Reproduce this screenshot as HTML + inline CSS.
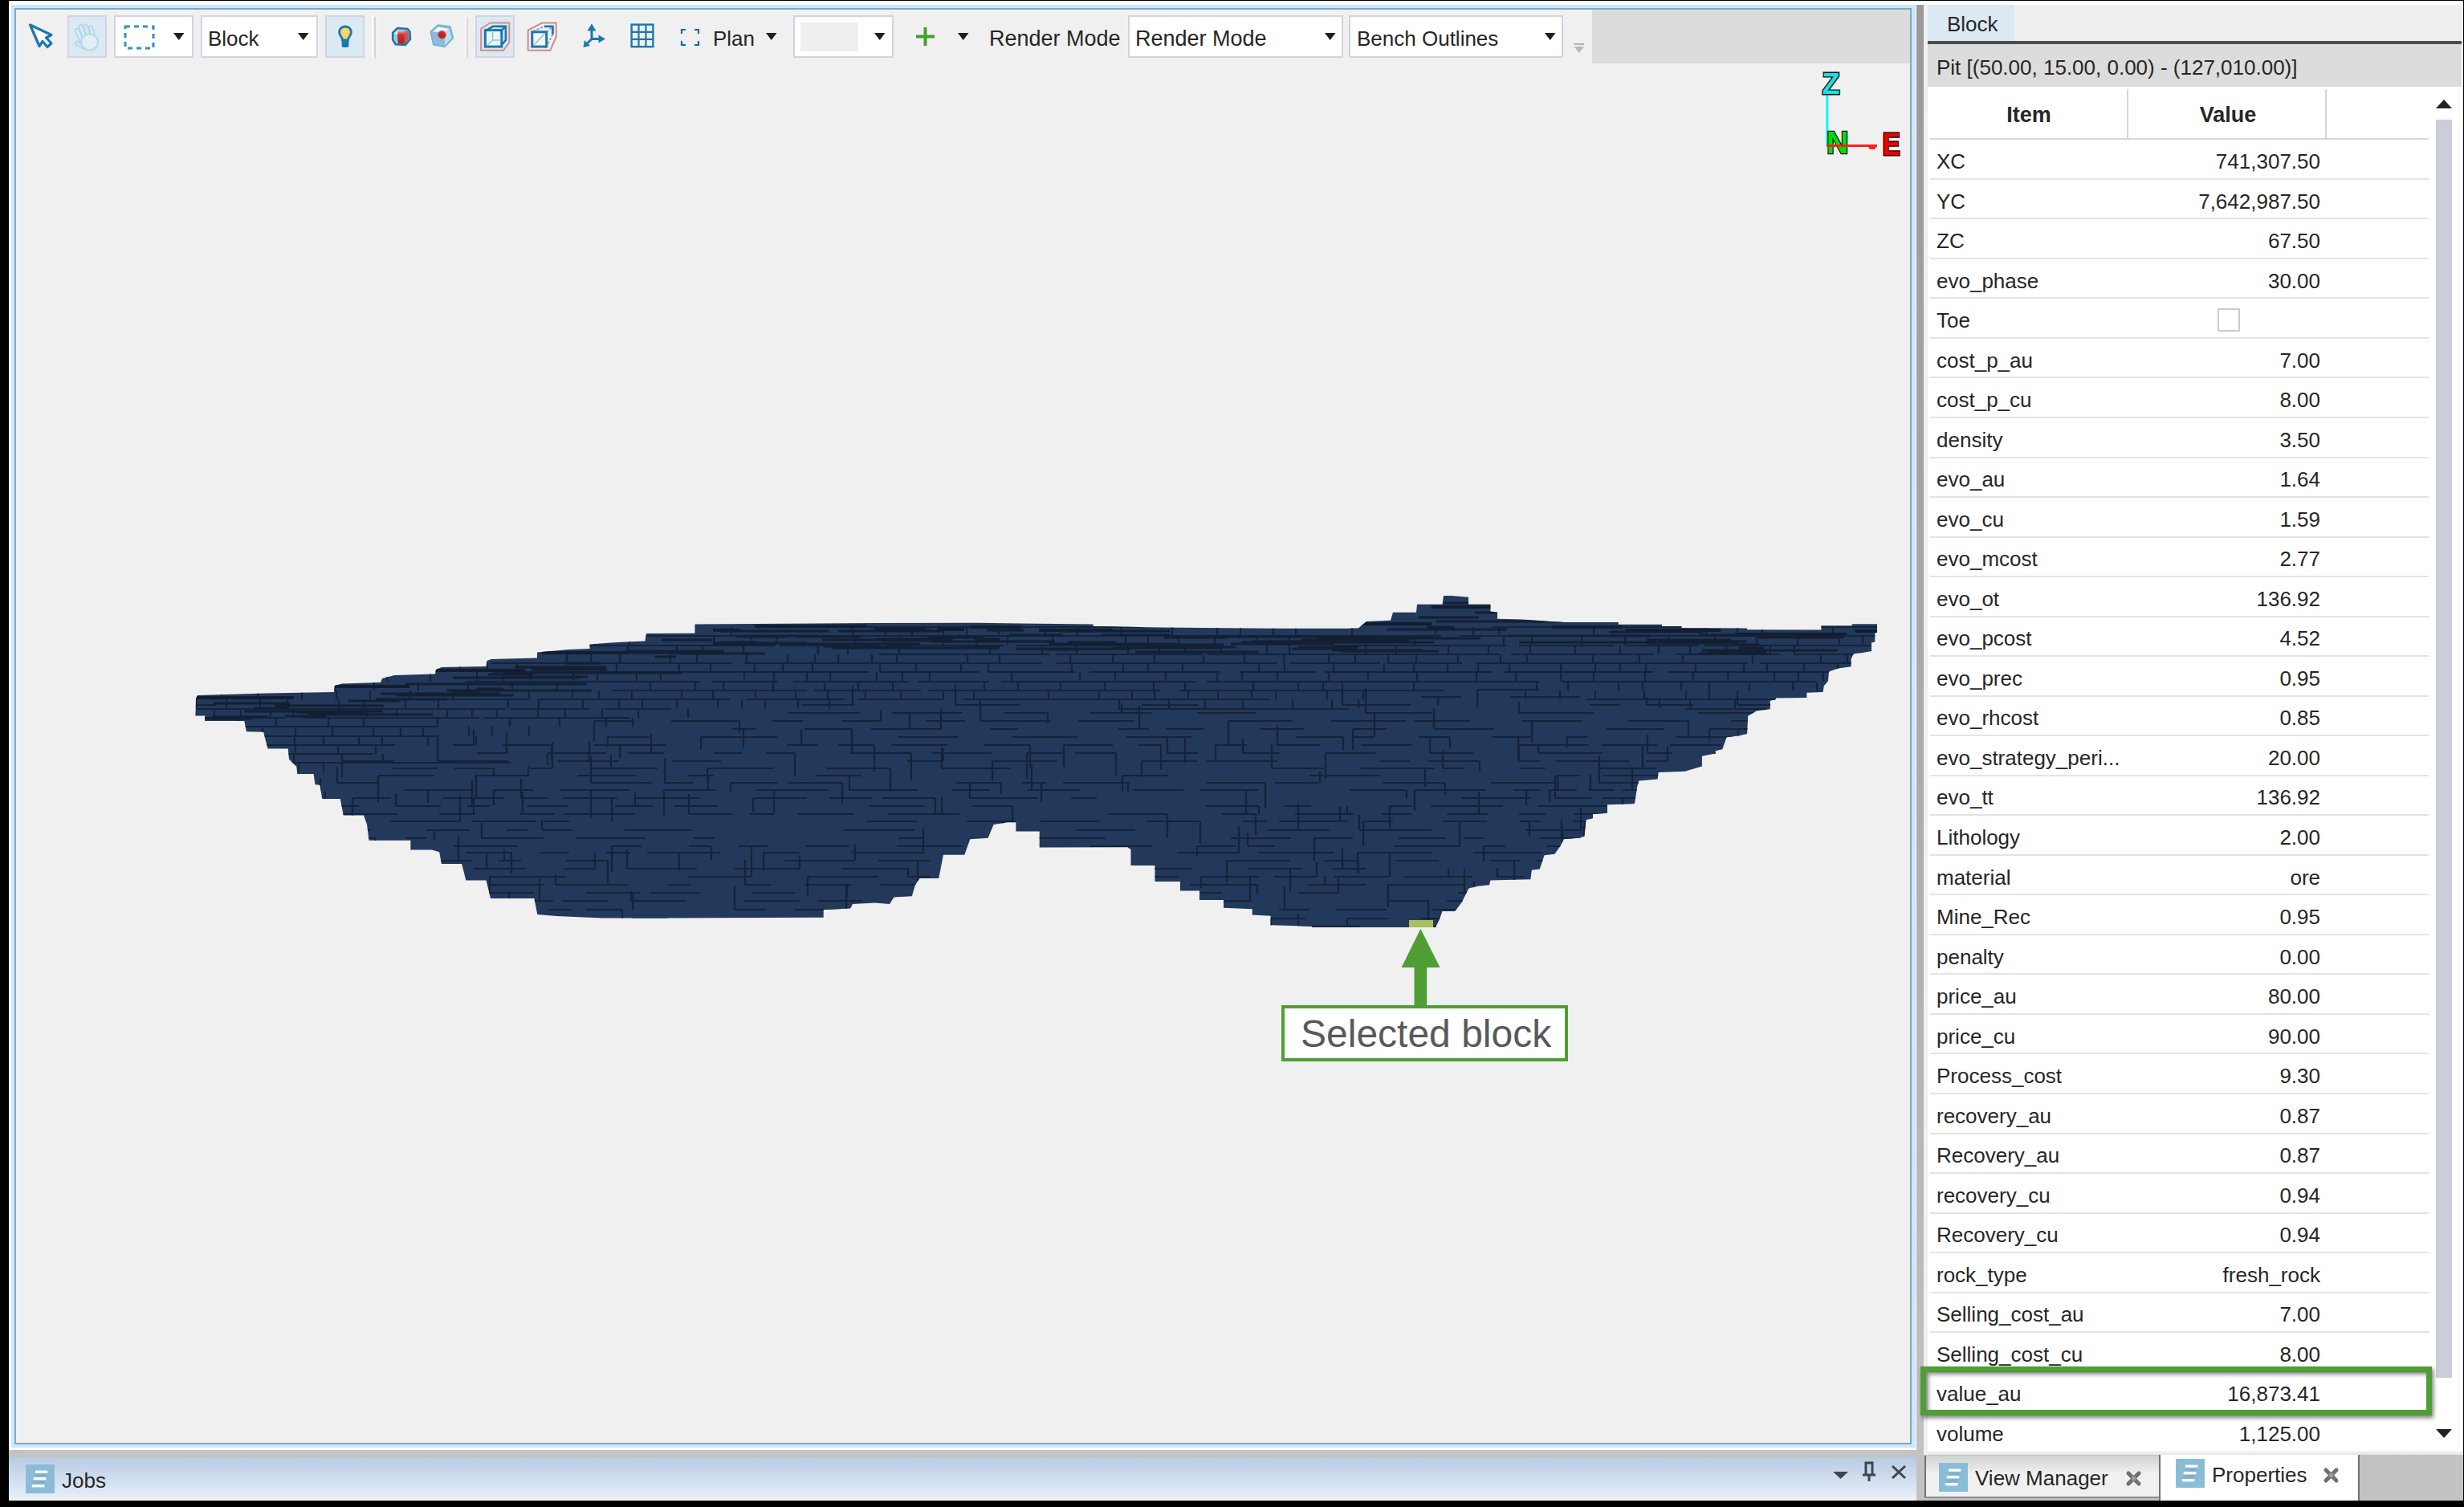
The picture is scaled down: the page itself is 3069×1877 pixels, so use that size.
<!DOCTYPE html><html><head><meta charset="utf-8"><style>
html,body{margin:0;padding:0;}
body{width:3069px;height:1877px;background:#000;position:relative;overflow:hidden;font-family:'Liberation Sans', sans-serif;}
.r{position:absolute;box-sizing:border-box;}
.t{position:absolute;white-space:nowrap;font-family:'Liberation Sans', sans-serif;}
svg{position:absolute;overflow:visible;}
</style></head><body>
<div class="r" style="left:11px;top:1px;width:3057px;height:1868px;background:#fff"></div>
<div class="r" style="left:14px;top:6px;width:2372px;height:1797px;background:#d2e4f8"></div>
<div class="r" style="left:18px;top:10px;width:2363px;height:1789px;background:#f0f0f0;border:2px solid #7aaac8"></div>
<div class="r" style="left:1983px;top:12px;width:396px;height:67px;background:#dcdcdc"></div>
<div class="r" style="left:2387px;top:6px;width:9px;height:1863px;background:linear-gradient(#999999,#acabab 50%,#c4c3c2)"></div>
<div class="r" style="left:11px;top:1806px;width:2376px;height:9px;background:#c4c3c2"></div>
<div class="r" style="left:11px;top:1815px;width:2376px;height:54px;background:linear-gradient(#b8cbe3,#e4edf9 90.7%,#f0f0f0 90.7%)"></div>
<div class="r" style="left:2396px;top:6px;width:5px;height:1807px;background:#f0f0f0"></div>
<div class="r" style="left:2401px;top:6px;width:667px;height:45px;background:#efefef"></div>
<div class="r" style="left:2401px;top:6px;width:108px;height:45px;background:#dbeaf2"></div>
<div class="r" style="left:2401px;top:51px;width:665px;height:4px;background:#4d4d4d"></div>
<div class="r" style="left:2401px;top:55px;width:665px;height:53px;background:#dcdcdc"></div>
<div class="r" style="left:2401px;top:108px;width:667px;height:1699px;background:#fff"></div>
<div class="r" style="left:2401px;top:1807px;width:667px;height:5px;background:linear-gradient(#f6f6f6,#e6e6e6)"></div>
<div class="r" style="left:2396px;top:1812px;width:672px;height:57px;background:#c3c2c2"></div>
<div class="r" style="left:2397px;top:1813px;width:294px;height:53px;background:linear-gradient(#d2d2d2,#f0f0f0 45%,#f0f0f0);border-left:2px solid #70727e;border-bottom:2px solid #8a8c96"></div>
<div class="r" style="left:2689px;top:1812px;width:250px;height:57px;background:#fff;border-left:2px solid #70727e;border-right:2px solid #70727e"></div>
<div class="t" style="left:2425px;top:16.99px;font-size:26px;line-height:26px;color:#262626;font-weight:normal;">Block</div>
<div class="t" style="left:2412px;top:70.99px;font-size:26px;line-height:26px;color:#262626;font-weight:normal;">Pit [(50.00, 15.00, 0.00) - (127,010.00)]</div>
<div class="r" style="left:2649px;top:111px;width:2px;height:61px;background:#d4d6e2"></div>
<div class="r" style="left:2896px;top:111px;width:2px;height:61px;background:#d4d6e2"></div>
<div class="r" style="left:2404px;top:172px;width:621px;height:2px;background:#d4d6e2"></div>
<div class="t" style="left:2227px;width:600px;text-align:center;top:129.64px;font-size:27px;line-height:27px;color:#262626;font-weight:bold;">Item</div>
<div class="t" style="left:2475px;width:600px;text-align:center;top:129.64px;font-size:27px;line-height:27px;color:#262626;font-weight:bold;">Value</div>
<div class="t" style="left:2412px;top:187.99px;font-size:26px;line-height:26px;color:#262626;font-weight:normal;">XC</div>
<div class="t" style="right:179px;top:187.99px;font-size:26px;line-height:26px;color:#262626;font-weight:normal;">741,307.50</div>
<div class="r" style="left:2404px;top:222px;width:621px;height:2px;background:#e4e4e4"></div>
<div class="t" style="left:2412px;top:237.52px;font-size:26px;line-height:26px;color:#262626;font-weight:normal;">YC</div>
<div class="t" style="right:179px;top:237.52px;font-size:26px;line-height:26px;color:#262626;font-weight:normal;">7,642,987.50</div>
<div class="r" style="left:2404px;top:271px;width:621px;height:2px;background:#e4e4e4"></div>
<div class="t" style="left:2412px;top:287.05px;font-size:26px;line-height:26px;color:#262626;font-weight:normal;">ZC</div>
<div class="t" style="right:179px;top:287.05px;font-size:26px;line-height:26px;color:#262626;font-weight:normal;">67.50</div>
<div class="r" style="left:2404px;top:321px;width:621px;height:2px;background:#e4e4e4"></div>
<div class="t" style="left:2412px;top:336.58px;font-size:26px;line-height:26px;color:#262626;font-weight:normal;">evo_phase</div>
<div class="t" style="right:179px;top:336.58px;font-size:26px;line-height:26px;color:#262626;font-weight:normal;">30.00</div>
<div class="r" style="left:2404px;top:370px;width:621px;height:2px;background:#e4e4e4"></div>
<div class="t" style="left:2412px;top:386.11px;font-size:26px;line-height:26px;color:#262626;font-weight:normal;">Toe</div>
<div class="r" style="left:2762px;top:384px;width:28px;height:29px;background:#fff;border:2px solid #c8cad8"></div>
<div class="r" style="left:2404px;top:420px;width:621px;height:2px;background:#e4e4e4"></div>
<div class="t" style="left:2412px;top:435.64px;font-size:26px;line-height:26px;color:#262626;font-weight:normal;">cost_p_au</div>
<div class="t" style="right:179px;top:435.64px;font-size:26px;line-height:26px;color:#262626;font-weight:normal;">7.00</div>
<div class="r" style="left:2404px;top:469px;width:621px;height:2px;background:#e4e4e4"></div>
<div class="t" style="left:2412px;top:485.17px;font-size:26px;line-height:26px;color:#262626;font-weight:normal;">cost_p_cu</div>
<div class="t" style="right:179px;top:485.17px;font-size:26px;line-height:26px;color:#262626;font-weight:normal;">8.00</div>
<div class="r" style="left:2404px;top:519px;width:621px;height:2px;background:#e4e4e4"></div>
<div class="t" style="left:2412px;top:534.70px;font-size:26px;line-height:26px;color:#262626;font-weight:normal;">density</div>
<div class="t" style="right:179px;top:534.70px;font-size:26px;line-height:26px;color:#262626;font-weight:normal;">3.50</div>
<div class="r" style="left:2404px;top:569px;width:621px;height:2px;background:#e4e4e4"></div>
<div class="t" style="left:2412px;top:584.23px;font-size:26px;line-height:26px;color:#262626;font-weight:normal;">evo_au</div>
<div class="t" style="right:179px;top:584.23px;font-size:26px;line-height:26px;color:#262626;font-weight:normal;">1.64</div>
<div class="r" style="left:2404px;top:618px;width:621px;height:2px;background:#e4e4e4"></div>
<div class="t" style="left:2412px;top:633.76px;font-size:26px;line-height:26px;color:#262626;font-weight:normal;">evo_cu</div>
<div class="t" style="right:179px;top:633.76px;font-size:26px;line-height:26px;color:#262626;font-weight:normal;">1.59</div>
<div class="r" style="left:2404px;top:668px;width:621px;height:2px;background:#e4e4e4"></div>
<div class="t" style="left:2412px;top:683.29px;font-size:26px;line-height:26px;color:#262626;font-weight:normal;">evo_mcost</div>
<div class="t" style="right:179px;top:683.29px;font-size:26px;line-height:26px;color:#262626;font-weight:normal;">2.77</div>
<div class="r" style="left:2404px;top:717px;width:621px;height:2px;background:#e4e4e4"></div>
<div class="t" style="left:2412px;top:732.82px;font-size:26px;line-height:26px;color:#262626;font-weight:normal;">evo_ot</div>
<div class="t" style="right:179px;top:732.82px;font-size:26px;line-height:26px;color:#262626;font-weight:normal;">136.92</div>
<div class="r" style="left:2404px;top:767px;width:621px;height:2px;background:#e4e4e4"></div>
<div class="t" style="left:2412px;top:782.35px;font-size:26px;line-height:26px;color:#262626;font-weight:normal;">evo_pcost</div>
<div class="t" style="right:179px;top:782.35px;font-size:26px;line-height:26px;color:#262626;font-weight:normal;">4.52</div>
<div class="r" style="left:2404px;top:816px;width:621px;height:2px;background:#e4e4e4"></div>
<div class="t" style="left:2412px;top:831.88px;font-size:26px;line-height:26px;color:#262626;font-weight:normal;">evo_prec</div>
<div class="t" style="right:179px;top:831.88px;font-size:26px;line-height:26px;color:#262626;font-weight:normal;">0.95</div>
<div class="r" style="left:2404px;top:866px;width:621px;height:2px;background:#e4e4e4"></div>
<div class="t" style="left:2412px;top:881.41px;font-size:26px;line-height:26px;color:#262626;font-weight:normal;">evo_rhcost</div>
<div class="t" style="right:179px;top:881.41px;font-size:26px;line-height:26px;color:#262626;font-weight:normal;">0.85</div>
<div class="r" style="left:2404px;top:915px;width:621px;height:2px;background:#e4e4e4"></div>
<div class="t" style="left:2412px;top:930.94px;font-size:26px;line-height:26px;color:#262626;font-weight:normal;">evo_strategy_peri...</div>
<div class="t" style="right:179px;top:930.94px;font-size:26px;line-height:26px;color:#262626;font-weight:normal;">20.00</div>
<div class="r" style="left:2404px;top:965px;width:621px;height:2px;background:#e4e4e4"></div>
<div class="t" style="left:2412px;top:980.47px;font-size:26px;line-height:26px;color:#262626;font-weight:normal;">evo_tt</div>
<div class="t" style="right:179px;top:980.47px;font-size:26px;line-height:26px;color:#262626;font-weight:normal;">136.92</div>
<div class="r" style="left:2404px;top:1014px;width:621px;height:2px;background:#e4e4e4"></div>
<div class="t" style="left:2412px;top:1030.00px;font-size:26px;line-height:26px;color:#262626;font-weight:normal;">Lithology</div>
<div class="t" style="right:179px;top:1030.00px;font-size:26px;line-height:26px;color:#262626;font-weight:normal;">2.00</div>
<div class="r" style="left:2404px;top:1064px;width:621px;height:2px;background:#e4e4e4"></div>
<div class="t" style="left:2412px;top:1079.53px;font-size:26px;line-height:26px;color:#262626;font-weight:normal;">material</div>
<div class="t" style="right:179px;top:1079.53px;font-size:26px;line-height:26px;color:#262626;font-weight:normal;">ore</div>
<div class="r" style="left:2404px;top:1113px;width:621px;height:2px;background:#e4e4e4"></div>
<div class="t" style="left:2412px;top:1129.06px;font-size:26px;line-height:26px;color:#262626;font-weight:normal;">Mine_Rec</div>
<div class="t" style="right:179px;top:1129.06px;font-size:26px;line-height:26px;color:#262626;font-weight:normal;">0.95</div>
<div class="r" style="left:2404px;top:1163px;width:621px;height:2px;background:#e4e4e4"></div>
<div class="t" style="left:2412px;top:1178.59px;font-size:26px;line-height:26px;color:#262626;font-weight:normal;">penalty</div>
<div class="t" style="right:179px;top:1178.59px;font-size:26px;line-height:26px;color:#262626;font-weight:normal;">0.00</div>
<div class="r" style="left:2404px;top:1212px;width:621px;height:2px;background:#e4e4e4"></div>
<div class="t" style="left:2412px;top:1228.12px;font-size:26px;line-height:26px;color:#262626;font-weight:normal;">price_au</div>
<div class="t" style="right:179px;top:1228.12px;font-size:26px;line-height:26px;color:#262626;font-weight:normal;">80.00</div>
<div class="r" style="left:2404px;top:1262px;width:621px;height:2px;background:#e4e4e4"></div>
<div class="t" style="left:2412px;top:1277.65px;font-size:26px;line-height:26px;color:#262626;font-weight:normal;">price_cu</div>
<div class="t" style="right:179px;top:1277.65px;font-size:26px;line-height:26px;color:#262626;font-weight:normal;">90.00</div>
<div class="r" style="left:2404px;top:1311px;width:621px;height:2px;background:#e4e4e4"></div>
<div class="t" style="left:2412px;top:1327.18px;font-size:26px;line-height:26px;color:#262626;font-weight:normal;">Process_cost</div>
<div class="t" style="right:179px;top:1327.18px;font-size:26px;line-height:26px;color:#262626;font-weight:normal;">9.30</div>
<div class="r" style="left:2404px;top:1361px;width:621px;height:2px;background:#e4e4e4"></div>
<div class="t" style="left:2412px;top:1376.71px;font-size:26px;line-height:26px;color:#262626;font-weight:normal;">recovery_au</div>
<div class="t" style="right:179px;top:1376.71px;font-size:26px;line-height:26px;color:#262626;font-weight:normal;">0.87</div>
<div class="r" style="left:2404px;top:1411px;width:621px;height:2px;background:#e4e4e4"></div>
<div class="t" style="left:2412px;top:1426.24px;font-size:26px;line-height:26px;color:#262626;font-weight:normal;">Recovery_au</div>
<div class="t" style="right:179px;top:1426.24px;font-size:26px;line-height:26px;color:#262626;font-weight:normal;">0.87</div>
<div class="r" style="left:2404px;top:1460px;width:621px;height:2px;background:#e4e4e4"></div>
<div class="t" style="left:2412px;top:1475.77px;font-size:26px;line-height:26px;color:#262626;font-weight:normal;">recovery_cu</div>
<div class="t" style="right:179px;top:1475.77px;font-size:26px;line-height:26px;color:#262626;font-weight:normal;">0.94</div>
<div class="r" style="left:2404px;top:1510px;width:621px;height:2px;background:#e4e4e4"></div>
<div class="t" style="left:2412px;top:1525.30px;font-size:26px;line-height:26px;color:#262626;font-weight:normal;">Recovery_cu</div>
<div class="t" style="right:179px;top:1525.30px;font-size:26px;line-height:26px;color:#262626;font-weight:normal;">0.94</div>
<div class="r" style="left:2404px;top:1559px;width:621px;height:2px;background:#e4e4e4"></div>
<div class="t" style="left:2412px;top:1574.83px;font-size:26px;line-height:26px;color:#262626;font-weight:normal;">rock_type</div>
<div class="t" style="right:179px;top:1574.83px;font-size:26px;line-height:26px;color:#262626;font-weight:normal;">fresh_rock</div>
<div class="r" style="left:2404px;top:1609px;width:621px;height:2px;background:#e4e4e4"></div>
<div class="t" style="left:2412px;top:1624.36px;font-size:26px;line-height:26px;color:#262626;font-weight:normal;">Selling_cost_au</div>
<div class="t" style="right:179px;top:1624.36px;font-size:26px;line-height:26px;color:#262626;font-weight:normal;">7.00</div>
<div class="r" style="left:2404px;top:1658px;width:621px;height:2px;background:#e4e4e4"></div>
<div class="t" style="left:2412px;top:1673.89px;font-size:26px;line-height:26px;color:#262626;font-weight:normal;">Selling_cost_cu</div>
<div class="t" style="right:179px;top:1673.89px;font-size:26px;line-height:26px;color:#262626;font-weight:normal;">8.00</div>
<div class="r" style="left:2404px;top:1708px;width:621px;height:2px;background:#e4e4e4"></div>
<div class="t" style="left:2412px;top:1723.42px;font-size:26px;line-height:26px;color:#262626;font-weight:normal;">value_au</div>
<div class="t" style="right:179px;top:1723.42px;font-size:26px;line-height:26px;color:#262626;font-weight:normal;">16,873.41</div>
<div class="r" style="left:2404px;top:1757px;width:621px;height:2px;background:#e4e4e4"></div>
<div class="t" style="left:2412px;top:1772.95px;font-size:26px;line-height:26px;color:#262626;font-weight:normal;">volume</div>
<div class="t" style="right:179px;top:1772.95px;font-size:26px;line-height:26px;color:#262626;font-weight:normal;">1,125.00</div>
<svg style="left:3034px;top:124px" width="20" height="12"><polygon points="0,11 10,0 20,11" fill="#222"/></svg>
<div class="r" style="left:3034px;top:149px;width:20px;height:1567px;background:#cbcdd9"></div>
<svg style="left:3034px;top:1780px" width="20" height="12"><polygon points="0,0 20,0 10,11" fill="#222"/></svg>
<div class="r" style="left:2392px;top:1702px;width:637px;height:61px;border:7px solid #4e9e34;box-shadow:2px 3px 5px rgba(0,0,0,0.5), inset 3px 3px 5px rgba(0,0,0,0.45)"></div>
<svg style="left:2415px;top:1822px" width="36" height="36"><defs><filter id="bl2415" x="-20%" y="-100%" width="140%" height="300%"><feGaussianBlur stdDeviation="0.9"/></filter></defs><rect width="36" height="36" fill="#8bbcd6"/><g filter="url(#bl2415)" fill="#6f9fb8" opacity="0.75"><rect x="12" y="12.5" width="14" height="2"/><rect x="10" y="21" width="14" height="2"/></g><rect x="12" y="7.6" width="15.3" height="3.2" fill="#fff"/><rect x="9.7" y="16.1" width="15.6" height="3.3" fill="#fff"/><rect x="7.8" y="25.1" width="15.6" height="3.3" fill="#fff"/></svg>
<div class="t" style="left:2460px;top:1827.99px;font-size:26px;line-height:26px;color:#262626;font-weight:normal;">View Manager</div>
<svg style="left:2648px;top:1832px" width="19" height="19"><path d="M3 3 L16 16 M16 3 L3 16" stroke="#707070" stroke-width="5" stroke-linecap="round"/><rect x="7" y="7" width="5" height="5" fill="#9a9a9a"/></svg>
<svg style="left:2710px;top:1817px" width="36" height="36"><defs><filter id="bl2710" x="-20%" y="-100%" width="140%" height="300%"><feGaussianBlur stdDeviation="0.9"/></filter></defs><rect width="36" height="36" fill="#8bbcd6"/><g filter="url(#bl2710)" fill="#6f9fb8" opacity="0.75"><rect x="12" y="12.5" width="14" height="2"/><rect x="10" y="21" width="14" height="2"/></g><rect x="12" y="7.6" width="15.3" height="3.2" fill="#fff"/><rect x="9.7" y="16.1" width="15.6" height="3.3" fill="#fff"/><rect x="7.8" y="25.1" width="15.6" height="3.3" fill="#fff"/></svg>
<div class="t" style="left:2755px;top:1823.99px;font-size:26px;line-height:26px;color:#262626;font-weight:normal;">Properties</div>
<svg style="left:2894px;top:1828px" width="19" height="19"><path d="M3 3 L16 16 M16 3 L3 16" stroke="#707070" stroke-width="5" stroke-linecap="round"/><rect x="7" y="7" width="5" height="5" fill="#9a9a9a"/></svg>
<svg style="left:32px;top:1824px" width="36" height="36"><defs><filter id="bl32" x="-20%" y="-100%" width="140%" height="300%"><feGaussianBlur stdDeviation="0.9"/></filter></defs><rect width="36" height="36" fill="#8bbcd6"/><g filter="url(#bl32)" fill="#6f9fb8" opacity="0.75"><rect x="12" y="12.5" width="14" height="2"/><rect x="10" y="21" width="14" height="2"/></g><rect x="12" y="7.6" width="15.3" height="3.2" fill="#fff"/><rect x="9.7" y="16.1" width="15.6" height="3.3" fill="#fff"/><rect x="7.8" y="25.1" width="15.6" height="3.3" fill="#fff"/></svg>
<div class="t" style="left:77px;top:1830.99px;font-size:26px;line-height:26px;color:#262626;font-weight:normal;">Jobs</div>
<svg style="left:2283px;top:1833px" width="19" height="9"><polygon points="0,0 19,0 9.5,9" fill="#3c4650"/></svg>
<svg style="left:2320px;top:1821px" width="16" height="24"><path d="M4 1 H12 V16 H4 Z M0 16 H16 M8 16 V24" stroke="#3c4650" stroke-width="3" fill="none"/></svg>
<svg style="left:2356px;top:1825px" width="18" height="17"><path d="M1 1 L17 16 M17 1 L1 16" stroke="#3c4650" stroke-width="3"/></svg>
<svg style="left:34px;top:27px" width="36" height="36"><path d="M3.5 4 L30 16.5 L23.5 20 L30 27 L25 31.5 L19 24.5 L15 30.5 Z" fill="#fff" stroke="#1a78b0" stroke-width="3.2" stroke-linejoin="round"/></svg>
<div class="r" style="left:84px;top:19px;width:49px;height:53px;background:#dbeaf2;border:2px solid #d3d3e3"></div>
<svg style="left:88px;top:24px" width="42" height="44"><g stroke="#b6d8e8" stroke-width="6.5" stroke-linecap="round" fill="none"><path d="M8 14 L14 28"/><path d="M12.5 9 L18 25"/><path d="M18.5 8.5 L23 23"/><path d="M25 10.5 L28 21"/><path d="M8 30 L15 34"/></g><g stroke="#dcecf4" stroke-width="2.5" stroke-linecap="round" fill="none"><path d="M8 14 L14 28"/><path d="M12.5 9 L18 25"/><path d="M18.5 8.5 L23 23"/><path d="M25 10.5 L28 21"/><path d="M8 30 L15 34"/></g><ellipse cx="23.5" cy="28.5" rx="10.5" ry="10" fill="#e2eff5" stroke="#b6d8e8" stroke-width="2.2"/></svg>
<div class="r" style="left:142px;top:19px;width:99px;height:53px;background:#fff;border:2px solid #d3d3e3"></div>
<svg style="left:154px;top:31px" width="40" height="32"><rect x="2" y="2" width="35" height="27" fill="none" stroke="#3a8ec0" stroke-width="3" stroke-dasharray="6 5"/></svg>
<svg style="left:216px;top:41px" width="14" height="10"><polygon points="0,0 13.5,0 6.75,9" fill="#1e1e1e"/></svg>
<div class="r" style="left:250px;top:19px;width:146px;height:53px;background:#fff;border:2px solid #d3d3e3"></div>
<div class="t" style="left:259px;top:34.99px;font-size:26px;line-height:26px;color:#262626;font-weight:normal;">Block</div>
<svg style="left:371px;top:41px" width="14" height="10"><polygon points="0,0 13.5,0 6.75,9" fill="#1e1e1e"/></svg>
<div class="r" style="left:405px;top:19px;width:49px;height:53px;background:#dbeaf2;border:2px solid #d3d3e3"></div>
<svg style="left:418px;top:29px" width="26" height="34"><path d="M12 4 C7.6 4 4.6 7.2 4.6 11.2 C4.6 14.2 6.6 16.2 8.3 19.2 L8.6 21 L15.4 21 L15.7 19.2 C17.4 16.2 19.4 14.2 19.4 11.2 C19.4 7.2 16.4 4 12 4 Z" fill="#ffd466" stroke="#1a78b0" stroke-width="2.8"/><rect x="7.6" y="20.5" width="8.8" height="9.5" rx="2" fill="#1a78b0"/></svg>
<div class="r" style="left:463px;top:19px;width:2px;height:53px;background:#fff"></div>
<div class="r" style="left:466px;top:21px;width:2px;height:51px;background:#d3d3e3"></div>
<div class="r" style="left:579px;top:19px;width:2px;height:53px;background:#fff"></div>
<div class="r" style="left:581px;top:21px;width:2px;height:51px;background:#d3d3e3"></div>
<svg style="left:484px;top:28px" width="34" height="34"><defs><linearGradient id="rg" x1="0" y1="0" x2="0" y2="1"><stop offset="0" stop-color="#f0c8c8"/><stop offset="0.35" stop-color="#c83030"/><stop offset="1" stop-color="#b81c1c"/></linearGradient></defs><path d="M5.2 12.6 L11.2 7 L23.7 8 L26.5 11.5 L26.9 20.9 L20.9 27.9 L8.7 27.2 L5.2 21.6 Z" fill="#9ccae0" stroke="#1a78b0" stroke-width="2.6" stroke-linejoin="round"/><path d="M7 14 L11.5 9 L12 15 Z" fill="#f2f8fb"/><path d="M11.2 9.4 L23.5 10.2 L24.8 13 L24.6 21 L20 26.6 L12 26.4 L11.2 20 Z" fill="url(#rg)"/><path d="M19.5 10 L23.5 10.2 L24.8 13 L24.6 21 L20 26.6 L19.5 26 Z" fill="#d45a5a" opacity="0.85"/></svg>
<svg style="left:534px;top:28px" width="34" height="34"><defs><radialGradient id="dg" cx="0.45" cy="0.6" r="0.6"><stop offset="0" stop-color="#c01818"/><stop offset="0.7" stop-color="#c83030"/><stop offset="1" stop-color="#e8a0a0"/></radialGradient></defs><path d="M2.4 11.5 L11.4 3.1 L26.8 5.2 L30.3 19.5 L19.8 30.4 L5.8 27.6 Z" fill="#88bcd8" stroke="#78b2d4" stroke-width="1.8" stroke-linejoin="round"/><path d="M5 11.5 L11.8 5.6 L25.5 7.8 L21 12.5 Z" fill="#eef7fb"/><path d="M19.5 12 L25.5 7.8 L28.5 19.5 L20 28.5 Z" fill="#bcdff0"/><circle cx="16.7" cy="15" r="5.4" fill="url(#dg)"/></svg>
<div class="r" style="left:592px;top:19px;width:49px;height:53px;background:#dbeaf2;border:2px solid #d3d3e3"></div>
<svg style="left:597px;top:26px" width="40" height="40"><path d="M2.2 9.5 L13.6 2.5 L37.3 2.5 L37.3 27 L30 36.8 L2.2 36.8 Z" fill="none" stroke="#d88a8a" stroke-width="2"/><path d="M9 11.6 L17 6.9 H32.9 V24.1 L27.8 30 M27.8 11.6 L32.9 6.9" fill="none" stroke="#1a78b0" stroke-width="2.6"/><rect x="7.4" y="11.6" width="20.4" height="20.5" fill="#eef6fa" stroke="#1a78b0" stroke-width="3"/><path d="M16.5 12 V24 H27 M16.5 24 L9 31" fill="none" stroke="#8cc4dc" stroke-width="1.5"/></svg>
<svg style="left:655px;top:26px" width="40" height="40"><path d="M2.7 11.6 L20.2 2.5 L37.7 2.5 L37.7 19.7 L30.4 36.8 L2.7 36.8 Z" fill="none" stroke="#d88a8a" stroke-width="2"/><path d="M22.8 6.9 H33.4 V16.8" fill="none" stroke="#1a78b0" stroke-width="2.8"/><path d="M9 13 L22.8 6.9 M25.7 13.8 L33.4 7 M33.4 16.8 L26 32" fill="none" stroke="#5aa0c8" stroke-width="1.6" stroke-dasharray="3 2"/><rect x="7.8" y="13.8" width="17.9" height="18.3" fill="#f4f4f4" stroke="#1a78b0" stroke-width="3"/><path d="M10 30 L23.5 16" fill="none" stroke="#8cc4dc" stroke-width="1.5"/></svg>
<svg style="left:724px;top:27px" width="34" height="36"><path d="M13 21.5 V9 M13 21.5 H23 M13 21.5 L5 29.5" stroke="#1a78b0" stroke-width="3" fill="none"/><polygon points="13,2.5 18.5,11.5 7.5,11.5" fill="#1a78b0"/><polygon points="30,21.5 21.5,16.5 21.5,26.5" fill="#1a78b0"/><polygon points="2.5,32 4,23 11,30" fill="#1a78b0"/></svg>
<svg style="left:784px;top:28px" width="32" height="33"><rect x="2.6" y="2.6" width="26.8" height="27.6" fill="none" stroke="#1a78b0" stroke-width="2.4"/><path d="M11.5 2 V31 M20.5 2 V31 M2 11.8 H30 M2 20.9 H30" stroke="#1a78b0" stroke-width="2.2"/></svg>
<svg style="left:848px;top:36px" width="24" height="22"><path d="M1 6 V1 H6 M17 1 H22 V6 M1 15 V20 H6 M17 20 H22 V15" fill="none" stroke="#0a6ea8" stroke-width="2.2"/></svg>
<div class="t" style="left:888px;top:34.99px;font-size:26px;line-height:26px;color:#262626;font-weight:normal;">Plan</div>
<svg style="left:954px;top:41px" width="14" height="10"><polygon points="0,0 13.5,0 6.75,9" fill="#1e1e1e"/></svg>
<div class="r" style="left:988px;top:19px;width:125px;height:53px;background:#fff;border:2px solid #d3d3e3"></div>
<div class="r" style="left:997px;top:28px;width:72px;height:36px;background:#efefef"></div>
<svg style="left:1089px;top:41px" width="14" height="10"><polygon points="0,0 13.5,0 6.75,9" fill="#1e1e1e"/></svg>
<svg style="left:1140px;top:33px" width="25" height="25"><path d="M12.5 1 V24 M1 12.5 H24" stroke="#4a9e30" stroke-width="4"/></svg>
<svg style="left:1193px;top:41px" width="14" height="10"><polygon points="0,0 13.5,0 6.75,9" fill="#1e1e1e"/></svg>
<div class="t" style="left:1232px;top:35.14px;font-size:27px;line-height:27px;color:#262626;font-weight:normal;">Render Mode</div>
<div class="r" style="left:1405px;top:19px;width:268px;height:53px;background:#fff;border:2px solid #d3d3e3"></div>
<div class="t" style="left:1414px;top:35.14px;font-size:27px;line-height:27px;color:#262626;font-weight:normal;">Render Mode</div>
<svg style="left:1650px;top:41px" width="14" height="10"><polygon points="0,0 13.5,0 6.75,9" fill="#1e1e1e"/></svg>
<div class="r" style="left:1680px;top:19px;width:267px;height:53px;background:#fff;border:2px solid #d3d3e3"></div>
<div class="t" style="left:1690px;top:34.99px;font-size:26px;line-height:26px;color:#262626;font-weight:normal;">Bench Outlines</div>
<svg style="left:1924px;top:41px" width="14" height="10"><polygon points="0,0 13.5,0 6.75,9" fill="#1e1e1e"/></svg>
<svg style="left:1960px;top:54px" width="14" height="14"><path d="M0.5 1 H13" stroke="#b0b0b0" stroke-width="2"/><polygon points="0.5,4 13,4 6.75,12" fill="#b8b8b8"/></svg>
<svg style="left:230px;top:730px" width="2120" height="440"><defs><clipPath id="pc"><polygon points="14.0,140.0 16.0,136.0 32.0,135.5 101.0,133.5 186.0,132.0 187.0,124.0 196.0,121.5 244.0,120.0 246.0,115.0 261.5,111.0 312.0,109.5 313.0,104.0 320.0,101.0 375.5,100.0 376.5,93.0 382.0,91.0 439.0,89.5 439.0,82.5 478.0,79.0 504.5,78.0 504.5,72.5 539.0,70.0 573.5,68.5 575.0,59.0 635.5,58.8 635.5,47.6 860.0,46.0 987.0,45.7 1131.6,47.6 1131.6,49.9 1217.0,51.4 1361.0,52.8 1447.0,52.8 1462.0,52.2 1472.0,44.0 1502.0,42.8 1505.0,32.8 1534.0,32.8 1535.0,22.8 1566.5,22.8 1568.0,12.0 1578.0,12.0 1599.0,13.7 1599.0,22.8 1626.4,22.8 1626.4,31.4 1635.0,32.8 1635.0,40.8 1666.4,41.4 1703.5,44.2 1720.0,45.0 1785.8,45.0 1785.8,47.8 1840.0,47.8 1840.0,50.0 1864.4,50.0 1864.4,52.0 1946.0,52.5 1946.0,54.2 2038.5,54.6 2038.5,49.3 2076.7,49.3 2076.7,47.2 2108.0,47.2 2108.0,57.8 2105.3,58.8 2105.3,69.4 2101.0,70.5 2101.0,81.1 2088.4,83.2 2078.8,84.3 2075.6,90.7 2075.6,100.2 2059.7,102.4 2048.0,106.6 2047.0,118.3 2041.7,124.6 2040.6,132.0 2020.4,132.7 2020.4,139.0 1982.2,139.5 1981.1,141.6 1974.8,142.7 1974.8,153.3 1957.8,155.4 1947.2,161.8 1946.1,184.1 1936.6,186.2 1920.6,188.3 1915.3,203.2 1906.8,205.3 1906.8,208.5 1889.9,211.7 1889.9,224.4 1868.6,230.8 1835.7,231.9 1834.6,240.4 1811.3,242.5 1809.2,249.9 1806.0,271.1 1772.0,272.2 1772.0,282.8 1754.0,283.9 1754.0,289.2 1745.5,291.3 1743.4,311.5 1738.0,313.6 1717.8,315.3 1713.5,323.8 1706.4,333.8 1693.5,335.2 1687.8,352.4 1677.8,353.8 1676.4,365.2 1626.4,366.6 1625.0,372.3 1610.8,373.8 1599.4,376.6 1590.8,393.7 1582.2,405.1 1566.5,405.1 1562.3,416.5 1558.0,425.0 1404.0,425.0 1404.0,423.7 1352.6,422.3 1352.6,410.8 1329.7,409.4 1329.7,402.3 1294.0,400.8 1294.0,390.9 1264.0,390.9 1264.0,379.5 1239.9,379.5 1239.9,368.0 1208.5,368.0 1208.5,348.0 1178.5,348.0 1178.5,328.0 1174.3,325.3 1064.7,325.5 1064.7,305.4 1035.4,305.4 1035.4,294.3 1025.7,294.3 1007.6,297.0 1000.6,313.8 978.3,315.2 971.3,334.7 944.9,334.7 939.3,364.0 915.6,364.0 910.0,372.3 905.8,386.3 883.5,387.6 878.0,396.0 859.9,394.6 832.0,396.0 829.2,401.6 795.7,403.0 795.7,412.7 600.0,413.6 520.3,413.6 463.2,411.0 439.3,409.0 435.4,388.9 381.0,388.9 375.6,366.6 350.4,366.6 345.1,345.9 319.9,345.9 317.2,331.3 308.0,328.6 281.4,328.6 281.4,316.7 229.6,316.7 227.0,296.8 223.0,285.4 197.8,285.4 193.8,265.0 171.2,265.0 168.6,247.7 162.5,247.2 160.6,233.9 140.2,233.9 139.4,225.0 130.0,215.8 128.8,202.5 103.5,202.5 98.2,181.8 77.0,181.3 74.3,168.0 25.2,168.0 25.2,161.4 13.3,161.4 13.8,152.0"/></clipPath></defs><polygon points="14.0,140.0 16.0,136.0 32.0,135.5 101.0,133.5 186.0,132.0 187.0,124.0 196.0,121.5 244.0,120.0 246.0,115.0 261.5,111.0 312.0,109.5 313.0,104.0 320.0,101.0 375.5,100.0 376.5,93.0 382.0,91.0 439.0,89.5 439.0,82.5 478.0,79.0 504.5,78.0 504.5,72.5 539.0,70.0 573.5,68.5 575.0,59.0 635.5,58.8 635.5,47.6 860.0,46.0 987.0,45.7 1131.6,47.6 1131.6,49.9 1217.0,51.4 1361.0,52.8 1447.0,52.8 1462.0,52.2 1472.0,44.0 1502.0,42.8 1505.0,32.8 1534.0,32.8 1535.0,22.8 1566.5,22.8 1568.0,12.0 1578.0,12.0 1599.0,13.7 1599.0,22.8 1626.4,22.8 1626.4,31.4 1635.0,32.8 1635.0,40.8 1666.4,41.4 1703.5,44.2 1720.0,45.0 1785.8,45.0 1785.8,47.8 1840.0,47.8 1840.0,50.0 1864.4,50.0 1864.4,52.0 1946.0,52.5 1946.0,54.2 2038.5,54.6 2038.5,49.3 2076.7,49.3 2076.7,47.2 2108.0,47.2 2108.0,57.8 2105.3,58.8 2105.3,69.4 2101.0,70.5 2101.0,81.1 2088.4,83.2 2078.8,84.3 2075.6,90.7 2075.6,100.2 2059.7,102.4 2048.0,106.6 2047.0,118.3 2041.7,124.6 2040.6,132.0 2020.4,132.7 2020.4,139.0 1982.2,139.5 1981.1,141.6 1974.8,142.7 1974.8,153.3 1957.8,155.4 1947.2,161.8 1946.1,184.1 1936.6,186.2 1920.6,188.3 1915.3,203.2 1906.8,205.3 1906.8,208.5 1889.9,211.7 1889.9,224.4 1868.6,230.8 1835.7,231.9 1834.6,240.4 1811.3,242.5 1809.2,249.9 1806.0,271.1 1772.0,272.2 1772.0,282.8 1754.0,283.9 1754.0,289.2 1745.5,291.3 1743.4,311.5 1738.0,313.6 1717.8,315.3 1713.5,323.8 1706.4,333.8 1693.5,335.2 1687.8,352.4 1677.8,353.8 1676.4,365.2 1626.4,366.6 1625.0,372.3 1610.8,373.8 1599.4,376.6 1590.8,393.7 1582.2,405.1 1566.5,405.1 1562.3,416.5 1558.0,425.0 1404.0,425.0 1404.0,423.7 1352.6,422.3 1352.6,410.8 1329.7,409.4 1329.7,402.3 1294.0,400.8 1294.0,390.9 1264.0,390.9 1264.0,379.5 1239.9,379.5 1239.9,368.0 1208.5,368.0 1208.5,348.0 1178.5,348.0 1178.5,328.0 1174.3,325.3 1064.7,325.5 1064.7,305.4 1035.4,305.4 1035.4,294.3 1025.7,294.3 1007.6,297.0 1000.6,313.8 978.3,315.2 971.3,334.7 944.9,334.7 939.3,364.0 915.6,364.0 910.0,372.3 905.8,386.3 883.5,387.6 878.0,396.0 859.9,394.6 832.0,396.0 829.2,401.6 795.7,403.0 795.7,412.7 600.0,413.6 520.3,413.6 463.2,411.0 439.3,409.0 435.4,388.9 381.0,388.9 375.6,366.6 350.4,366.6 345.1,345.9 319.9,345.9 317.2,331.3 308.0,328.6 281.4,328.6 281.4,316.7 229.6,316.7 227.0,296.8 223.0,285.4 197.8,285.4 193.8,265.0 171.2,265.0 168.6,247.7 162.5,247.2 160.6,233.9 140.2,233.9 139.4,225.0 130.0,215.8 128.8,202.5 103.5,202.5 98.2,181.8 77.0,181.3 74.3,168.0 25.2,168.0 25.2,161.4 13.3,161.4 13.8,152.0" fill="#22395b"/><g clip-path="url(#pc)"><path d="M798 51h394 M1629 51h386 M2032 51h164 M6 51v11.3 M681 51v11.3 M832 51v11.3 M873 51v11.3 M906 51v11.3 M945 51v11.3 M974 51v11.3 M1014 51v11.3 M1072 51v11.3 M1112 51v11.3 M1166 51v11.3 M1230 51v11.3 M1286 51v11.3 M1315 51v11.3 M1356 51v11.3 M1384 51v11.3 M1454 51v11.3 M1558 51v11.3 M1605 51v11.3 M1637 51v11.3 M1755 51v11.3 M1895 51v11.3 M1934 51v11.3 M1965 51v11.3 M2053 51v11.3 M551 62h235 M792 62h391 M1200 62h365 M1588 62h403 M2015 62h116 M511 62v11.3 M554 62v11.3 M659 62v11.3 M706 62v11.3 M737 62v11.3 M836 62v11.3 M892 62v11.3 M945 62v11.3 M986 62v11.3 M1025 62v11.3 M1081 62v11.3 M1172 62v11.3 M1200 62v11.3 M1238 62v11.3 M1283 62v11.3 M1335 62v11.3 M1376 62v11.3 M1431 62v11.3 M1472 62v11.3 M1532 62v11.3 M1643 62v11.3 M1678 62v11.3 M1740 62v11.3 M1794 62v11.3 M1849 62v11.3 M1906 62v11.3 M1958 62v11.3 M2009 62v11.3 M2061 62v11.3 M2090 62v11.3 M494 74h240 M740 74h125 M874 74h146 M1036 74h209 M1429 74h218 M1662 74h119 M1794 74h92 M1893 74h265 M552 74v11.3 M613 74v11.3 M645 74v11.3 M696 74v11.3 M789 74v11.3 M826 74v11.3 M890 74v11.3 M1003 74v11.3 M1068 74v11.3 M1111 74v11.3 M1175 74v11.3 M1214 74v11.3 M1246 74v11.3 M1291 74v11.3 M1348 74v11.3 M1376 74v11.3 M1471 74v11.3 M1509 74v11.3 M1574 74v11.3 M1624 74v11.3 M1676 74v11.3 M1732 74v11.3 M1788 74v11.3 M1836 74v11.3 M1875 74v11.3 M1920 74v11.3 M1975 74v11.3 M2005 74v11.3 M2110 74v11.3 M864 85h213 M1086 85h181 M1273 85h364 M1652 85h177 M1858 85h129 M2004 85h249 M476 85v11.3 M506 85v11.3 M542 85v11.3 M605 85v11.3 M638 85v11.3 M700 85v11.3 M751 85v11.3 M785 85v11.3 M814 85v11.3 M856 85v11.3 M887 85v11.3 M975 85v11.3 M1015 85v11.3 M1103 85v11.3 M1156 85v11.3 M1208 85v11.3 M1269 85v11.3 M1320 85v11.3 M1369 85v11.3 M1425 85v11.3 M1458 85v11.3 M1499 85v11.3 M1534 85v11.3 M1586 85v11.3 M1639 85v11.3 M1672 85v11.3 M1754 85v11.3 M1812 85v11.3 M1866 85v11.3 M1953 85v11.3 M2038 85v11.3 M2071 85v11.3 M2112 85v11.3 M382 96h300 M697 96h370 M1086 96h275 M1376 96h113 M1498 96h93 M1608 96h339 M1962 96h383 M343 96v11.3 M377 96v11.3 M414 96v11.3 M538 96v11.3 M616 96v11.3 M655 96v11.3 M710 96v11.3 M745 96v11.3 M782 96v11.3 M866 96v11.3 M911 96v11.3 M967 96v11.3 M1001 96v11.3 M1105 96v11.3 M1169 96v11.3 M1200 96v11.3 M1243 96v11.3 M1338 96v11.3 M1370 96v11.3 M1431 96v11.3 M1494 96v11.3 M1531 96v11.3 M1573 96v11.3 M1611 96v11.3 M1650 96v11.3 M1714 96v11.3 M1757 96v11.3 M1788 96v11.3 M1820 96v11.3 M1882 96v11.3 M1942 96v11.3 M1971 96v11.3 M2017 96v11.3 M2059 96v11.3 M385 107h119 M510 107h343 M865 107h124 M1000 107h109 M1127 107h163 M1313 107h96 M1421 107h207 M1643 107h187 M1848 107h385 M252 107v11.3 M306 107v11.3 M364 107v11.3 M397 107v11.3 M431 107v11.3 M484 107v11.3 M514 107v11.3 M563 107v11.3 M593 107v11.3 M697 107v11.3 M734 107v11.3 M775 107v11.3 M804 107v11.3 M862 107v11.3 M894 107v11.3 M928 107v11.3 M1030 107v11.3 M1115 107v11.3 M1159 107v11.3 M1222 107v11.3 M1286 107v11.3 M1317 107v11.3 M1361 107v11.3 M1425 107v11.3 M1474 107v11.3 M1535 107v11.3 M1609 107v11.3 M1658 107v11.3 M1714 107v11.3 M1755 107v11.3 M1819 107v11.3 M1879 107v11.3 M1922 107v11.3 M1980 107v11.3 M2010 107v11.3 M2041 107v11.3 M2103 107v11.3 M350 119h292 M656 119h83 M758 119h143 M913 119h89 M1017 119h242 M1273 119h414 M1715 119h316 M2048 119h352 M187 119v11.3 M236 119v11.3 M291 119v11.3 M353 119v11.3 M408 119v11.3 M464 119v11.3 M580 119v11.3 M636 119v11.3 M671 119v11.3 M733 119v11.3 M797 119v11.3 M839 119v11.3 M882 119v11.3 M996 119v11.3 M1038 119v11.3 M1091 119v11.3 M1146 119v11.3 M1207 119v11.3 M1246 119v11.3 M1331 119v11.3 M1387 119v11.3 M1418 119v11.3 M1531 119v11.3 M1684 119v11.3 M1723 119v11.3 M1786 119v11.3 M1816 119v11.3 M1864 119v11.3 M1899 119v11.3 M1949 119v11.3 M2003 119v11.3 M2033 119v11.3 M349 130h158 M533 130h242 M784 130h133 M926 130h289 M1239 130h330 M10 130v11.3 M46 130v11.3 M91 130v11.3 M146 130v11.3 M189 130v11.3 M231 130v11.3 M281 130v11.3 M334 130v11.3 M429 130v11.3 M483 130v11.3 M516 130v11.3 M557 130v11.3 M619 130v11.3 M658 130v11.3 M711 130v11.3 M761 130v11.3 M801 130v11.3 M848 130v11.3 M892 130v11.3 M945 130v11.3 M983 130v11.3 M1076 130v11.3 M1139 130v11.3 M1180 130v11.3 M1208 130v11.3 M1250 130v11.3 M1287 130v11.3 M1329 130v11.3 M1359 130v11.3 M1423 130v11.3 M1468 130v11.3 M1670 130v11.3 M1713 130v11.3 M1757 130v11.3 M1818 130v11.3 M1870 130v11.3 M1899 130v11.3 M274 141h154 M439 141h240 M700 141h122 M838 141h105 M970 141h381 M1746 141h284 M14 141v11.3 M52 141v11.3 M94 141v11.3 M128 141v11.3 M192 141v11.3 M223 141v11.3 M275 141v11.3 M316 141v11.3 M403 141v11.3 M441 141v11.3 M496 141v11.3 M541 141v11.3 M570 141v11.3 M613 141v11.3 M664 141v11.3 M694 141v11.3 M723 141v11.3 M764 141v11.3 M803 141v11.3 M1164 141v11.3 M1226 141v11.3 M1271 141v11.3 M1318 141v11.3 M1380 141v11.3 M1429 141v11.3 M1462 141v11.3 M1837 141v11.3 M1875 141v11.3 M1931 141v11.3 M1989 141v11.3 M2032 141v11.3 M2069 141v11.3 M14 153h385 M406 153h98 M523 153h83 M1162 153h288 M1869 153h102 M1977 153h103 M2101 153h383 M37 153v11.3 M70 153v11.3 M107 153v11.3 M135 153v11.3 M228 153v11.3 M264 153v11.3 M327 153v11.3 M358 153v11.3 M389 153v11.3 M440 153v11.3 M474 153v11.3 M520 153v11.3 M565 153v11.3 M627 153v11.3 M12 164h113 M147 164h220 M372 164h182 M67 164v11.3 M114 164v11.3 M179 164v11.3 M223 164v11.3 M315 164v11.3 M405 164v11.3 M467 164v11.3 M525 164v11.3 M558 164v11.3 M17 175h297 M38 175v11.3 M97 175v11.3 M138 175v11.3 M184 175v11.3 M235 175v11.3 M269 175v11.3 M297 175v11.3 M354 175v11.3 M383 175v11.3 M429 175v11.3 M20 187h292 M41 187v11.3 M137 187v11.3 M173 187v11.3 M217 187v11.3 M246 187v11.3 M303 187v11.3 M363 187v11.3 M20 198h242 M42 198v11.3 M138 198v11.3 M191 198v11.3 M238 198v11.3 M17 209h218 M19 209v11.3 M48 209v11.3 M82 209v11.3 M136 209v11.3 M196 209v11.3 M247 209v11.3 M8 220h398 M51 220v11.3 M108 220v11.3 M142 220v11.3 M173 220v11.3 M1610 129h77 M1610 129v22 M1540 138h50 M1561 138v11 M1651 138h87 M9 148h30 M9 148v15 M768 148h67 M832 124v24 M960 148h80 M960 122v26 M1192 148h70 M1442 148h85 M1442 121v27 M1750 148h37 M1821 148h58 M1821 138v10 M1934 148h90 M1934 130v18 M2053 148h94 M752 158h90 M881 158h87 M903 158v19 M1020 158h55 M1075 158v13 M1128 158h76 M1167 146v13 M1261 158h74 M1471 158h83 M1471 127v32 M1662 158h93 M1662 144v15 M1885 158h86 M1997 158h55 M2052 158v16 M510 168h49 M510 168v26 M606 168h85 M691 168v14 M731 168h39 M819 168h48 M867 154v14 M923 168h49 M991 168h87 M991 141v27 M1113 168h70 M1300 168h80 M1300 168v30 M1428 168h93 M1532 168h69 M1666 168h75 M1678 168v27 M1798 168h75 M1873 168v21 M1926 168h44 M1986 168h31 M682 178h30 M696 178v23 M772 178h59 M831 178v29 M855 178h88 M942 153v25 M1003 178h35 M1163 178h38 M1189 149v30 M1222 178h48 M1340 178h54 M1455 178h42 M1455 178v26 M1556 178h75 M1556 152v26 M1770 178h73 M1899 178h49 M1899 178v14 M2011 178h31 M2011 178v18 M2078 178h70 M2078 149v29 M527 188h52 M527 188v13 M643 188h95 M643 188v16 M889 188h74 M1030 188h82 M1172 188h82 M1246 188v32 M1384 188h59 M1443 188v17 M1456 188h26 M1482 157v31 M1537 188h39 M1576 188v14 M1628 188h50 M1661 188v29 M1722 188h25 M1722 188v13 M1857 188h92 M1949 188v14 M1998 188h49 M2035 168v20 M2089 188h79 M2089 188v13 M334 198h26 M360 178v20 M396 198h61 M457 198v19 M510 198h90 M542 198v16 M750 198h39 M768 179v20 M814 198h45 M859 198v33 M880 198h70 M995 198h58 M1053 198v29 M1095 198h61 M1095 198v27 M1188 198h28 M1216 198v30 M1284 198h39 M1284 198v18 M1361 198h53 M1361 175v23 M1465 198h63 M1659 198h90 M1764 198h70 M1816 198v30 M1850 198h63 M1954 198h71 M2022 198v28 M2057 198h81 M2057 179v20 M364 208h38 M401 181v27 M452 208h73 M452 208v15 M553 208h44 M581 184v24 M659 208h35 M724 208h36 M760 208v29 M829 208h76 M905 208v33 M930 208h75 M1049 208h45 M1049 208v32 M1109 208h51 M1160 208v28 M1224 208h38 M1224 188v20 M1318 208h46 M1318 189v19 M1421 208h62 M1421 208v32 M1551 208h54 M1551 189v19 M1686 208h80 M1686 197v11 M1822 208h30 M1822 185v23 M1905 208h30 M1935 177v31 M2050 208h81 M2093 180v28 M196 218h64 M196 218v20 M315 218h88 M315 185v33 M464 218h77 M504 194v23 M607 218h61 M900 218h44 M945 202v16 M1005 218h81 M1006 218v24 M1192 218h69 M1192 218v20 M1273 218h88 M1488 218h38 M1549 218h63 M1613 218v13 M1662 218h26 M1662 199v18 M1708 218h91 M1821 218h26 M1847 199v19 M1912 218h49 M2027 218h72 M2040 218v11 M259 227h56 M336 227h49 M385 227v10 M430 227h28 M458 194v33 M506 227h83 M531 210v17 M651 227h82 M651 227v15 M799 227h80 M879 227v29 M943 227h86 M943 201v26 M1354 227h65 M1354 197v30 M1465 227h91 M1545 227v23 M1567 227h27 M1567 205v22 M1664 227h31 M1760 227h73 M1992 227h63 M2071 227h32 M2071 217v10 M42 236h39 M100 236h40 M100 236v11 M241 236h70 M241 236v33 M361 236h68 M428 224v12 M489 236h74 M626 236h33 M652 236v19 M786 236h57 M1168 236h57 M1168 236v19 M1401 236h88 M1710 236h27 M1710 236v18 M1766 236h89 M13 245h46 M13 219v26 M77 245h60 M132 245v22 M190 245h51 M190 225v20 M506 245h76 M506 212v33 M597 245h36 M598 215v30 M680 245h58 M680 245v11 M752 245h67 M819 245v26 M961 245h56 M1017 245v14 M1043 245h30 M1067 245v24 M1094 245h82 M1175 245v12 M1273 245h73 M1346 245v31 M1358 245h55 M1414 231v14 M1492 245h78 M1570 245v15 M1627 245h85 M1762 245h66 M1762 212v33 M1869 245h74 M1998 245h33 M2032 231v14 M2066 245h43 M2067 232v13 M32 254h39 M71 254v23 M274 254h86 M303 254v16 M385 254h49 M385 254v19 M467 254h88 M506 254v34 M597 254h65 M597 254v31 M712 254h90 M828 254h86 M828 236v19 M956 254h47 M1050 254h66 M1055 222v33 M1181 254h63 M1265 254h72 M1322 254v31 M1452 254h70 M1522 254v11 M1532 254h89 M1532 254v26 M1655 254h33 M1671 254v19 M1700 254h34 M1700 254v15 M1749 254h32 M1751 234v20 M1791 254h27 M1803 228v26 M1873 254h54 M1946 254h84 M1946 242v12 M2077 254h40 M2116 254v31 M22 264h66 M88 239v25 M127 264h42 M169 239v25 M209 264h48 M209 264v26 M322 264h76 M363 237v27 M419 264h33 M419 240v25 M471 264h68 M532 264v29 M561 264h80 M708 264h67 M708 264v17 M803 264h53 M869 264h66 M935 264v20 M978 264h85 M978 244v21 M1104 264h32 M1590 264h87 M1707 264h45 M1707 236v29 M1766 264h51 M1791 264v13 M1878 264h34 M1878 264v28 M9 274h30 M9 274v20 M87 274h50 M151 274h66 M151 274v11 M263 274h56 M263 258v16 M353 274h27 M358 242v31 M426 274h52 M536 274h47 M561 257v17 M610 274h54 M853 274h68 M981 274h49 M1031 274v29 M1272 274h65 M1338 274v11 M1370 274h33 M1501 274h27 M1501 274v28 M1552 274h90 M1685 274h89 M1773 274v20 M1813 274h27 M1813 258v16 M1989 274h94 M64 284h59 M171 284h94 M175 256v28 M317 284h44 M360 265v19 M417 284h44 M421 256v28 M472 284h89 M628 284h54 M628 259v25 M704 284h30 M734 253v31 M764 284h70 M876 284h89 M943 263v21 M1150 284h74 M1224 284v30 M1292 284h42 M1334 284v26 M1383 284h73 M1448 274v10 M1491 284h37 M1572 284h52 M1612 256v28 M1662 284h33 M1731 284h58 M1789 284v20 M1812 284h83 M1828 255v29 M2016 284h90 M2079 254v30 M45 293h69 M75 293v16 M168 293h37 M256 293h87 M343 261v32 M357 293h81 M448 293h31 M850 293h62 M974 293h61 M1019 293v32 M1066 293h74 M1198 293h67 M1265 293v28 M1317 293h31 M1363 293h86 M1439 275v18 M1468 293h37 M1468 293v31 M1566 293h56 M1588 293v31 M1663 293h26 M1675 293v19 M1729 293h92 M1744 293v24 M1861 293h79 M59 304h55 M59 304v23 M143 304h88 M301 304h54 M311 304v12 M401 304h26 M445 304h38 M445 291v12 M548 304h83 M821 304h88 M1111 304h73 M1349 304h77 M1387 271v32 M1463 304h90 M1463 285v19 M1671 304h68 M1739 276v28 M1803 304h89 M1913 304h77 M2027 304h41 M2054 304v13 M41 314h81 M122 288v26 M162 314h76 M237 314v33 M276 314h25 M370 314h77 M370 295v19 M487 314h87 M634 314h26 M889 314h30 M1060 314h87 M1060 314v32 M1303 314h75 M1406 314h49 M1407 314v28 M1512 314h59 M1593 314h25 M1688 314h61 M1715 292v21 M1768 314h63 M1886 314h34 M1886 314v32 M1940 314h78 M2018 314v19 M2071 314h33 M215 324h61 M335 324h80 M532 324h37 M532 324v32 M628 324h28 M656 324v17 M690 324h37 M706 324v12 M773 324h54 M887 324h82 M1030 324h27 M1057 306v18 M1127 324h78 M1261 324h48 M1261 324v12 M1324 324h34 M1324 307v16 M1506 324h83 M1618 324h27 M1618 324v19 M1696 324h47 M1743 299v24 M1802 324h66 M1802 292v32 M1909 324h89 M1997 292v31 M137 332h77 M228 332h64 M286 332v18 M350 332h57 M407 332v26 M443 332h36 M525 332h29 M576 332h91 M616 332v22 M721 332h45 M721 332v23 M831 332h89 M920 302v31 M1057 332h31 M1057 332v25 M1236 332h78 M1313 299v34 M1338 332h94 M1461 332h93 M1461 332v24 M1605 332h87 M1716 332h43 M1716 300v33 M1809 332h56 M1809 332v31 M1904 332h77 M1921 306v26 M2022 332h69 M2091 332v19 M40 342h93 M40 342v10 M175 342h45 M258 342h26 M302 342h55 M341 312v29 M391 342h28 M398 329v13 M475 342h52 M527 342v28 M747 342h88 M835 322v19 M864 342h65 M913 342v25 M955 342h50 M1005 316v25 M1032 342h66 M1098 342v20 M1298 342h79 M1298 342v27 M1419 342h43 M1462 342v16 M1508 342h54 M1627 342h37 M1656 342v25 M1684 342h62 M1797 342h78 M1875 330v11 M1893 342h57 M1950 342v22 M1981 342h49 M2052 342h45 M2097 342v18 M15 352h59 M73 321v31 M360 352h64 M376 331v21 M473 352h38 M511 332v20 M551 352h87 M551 328v24 M685 352h81 M766 335v17 M818 352h84 M901 352v11 M1056 352h76 M1169 352h86 M1169 352v28 M1325 352h66 M1377 352v28 M1430 352h41 M1442 327v25 M1777 352h72 M1864 352h79 M30 362h64 M137 362h75 M211 329v33 M278 362h53 M278 362v15 M380 362h94 M380 362v22 M626 362h80 M706 334v28 M776 362h88 M776 362v24 M903 362h25 M920 362v28 M969 362h44 M1000 345v17 M1145 362h93 M1145 343v19 M1266 362h72 M1266 362v14 M1357 362h53 M1410 344v18 M1432 362h69 M1501 334v28 M1518 362h86 M1574 351v11 M1635 362h33 M1635 351v11 M1718 362h74 M1792 362v19 M1861 362h71 M2062 362h33 M2094 336v26 M2113 362h83 M2196 362v11 M245 372h37 M312 372h45 M357 372v33 M380 372h68 M462 372h91 M462 359v13 M602 372h28 M698 372h32 M698 341v31 M772 372h58 M825 372v15 M867 372h85 M952 372v33 M1071 372h34 M1105 359v13 M1146 372h69 M1252 372h84 M1336 372v12 M1400 372h72 M1420 361v12 M1499 372h94 M1499 372v28 M1633 372h42 M1633 372v31 M1787 372h42 M1877 372h68 M1945 348v24 M1959 372h94 M2053 356v17 M19 382h56 M47 382v19 M119 382h52 M137 357v25 M188 382h64 M188 382v18 M364 382h71 M364 372v10 M500 382h67 M558 382v22 M579 382h62 M707 382h53 M1032 382h68 M1032 382v27 M1147 382h26 M1213 382h79 M1214 382v22 M1388 382h49 M1437 364v18 M1586 382h36 M1594 352v30 M1661 382h50 M1771 382h80 M1869 382h89 M1869 382v27 M1999 382h92 M2113 382h49 M2113 382v30 M163 392h33 M171 359v34 M209 392h61 M269 365v27 M279 392h42 M284 392v28 M337 392h39 M376 380v12 M430 392h29 M442 363v29 M471 392h57 M556 392h69 M556 380v12 M696 392h70 M788 392h56 M1002 392h82 M1061 392v30 M1099 392h75 M1242 392h86 M1327 362v31 M1501 392h48 M1549 392v31 M1572 392h34 M1606 368v25 M1625 392h54 M1723 392h60 M1783 367v25 M1988 392h48 M1988 392v25 M2047 392h79 M2126 371v21 M149 403h70 M285 403h64 M366 403h49 M404 383v20 M453 403h30 M500 403h45 M545 403v13 M685 403h40 M685 374v29 M760 403h71 M824 372v31 M875 403h94 M1031 403h54 M1143 403h94 M1363 403h38 M1370 374v29 M1434 403h63 M1554 403h60 M1684 403h82 M1832 403h78 M1832 403v19 M1971 403h32 M2013 403h67 M2111 403h30 M2141 403v26 M11 414h27 M68 414h33 M68 389v24 M122 414h25 M203 414h82 M326 414h45 M326 389v25 M451 414h55 M506 414v17 M557 414h45 M702 414h37 M732 414v28 M1025 414h32 M1025 414v13 M1094 414h57 M1107 414v19 M1166 414h30 M1195 394v19 M1353 414h43 M1353 414v18 M1448 414h50 M1448 414v30 M1538 414h63 M1665 414h77 M1665 382v32 M1797 414h85 M1882 414v13 M1926 414h48 M1926 414v18 M2032 414h52 M2032 414v21 M2095 414h63 M2158 401v13 M30 424h60 M30 424v17 M245 424h58 M245 424v11 M363 424h69 M433 396v28 M464 424h73 M588 424h49 M703 424h83 M786 424v26 M797 424h55 M870 424h57 M927 393v31 M1133 424h45 M1231 424h61 M1292 408v16 M1323 424h26 M1349 424v22 M1387 424h77 M1387 409v15 M1528 424h73 M1600 424v30 M1721 424h71 M1721 413v11 M1904 424h90 M1994 424v27" stroke="#15223a" stroke-width="2.2" fill="none"/><path d="M14 139h122 M140 125h140 M285 105h139 M445 83h103 M658 55h34 M710 50h139 M858 54h64 M937 54h34 M978 51h64 M1064 55h92 M1432 47h121 M1553 26h138 M1703 51h87 M1794 55h119 M1931 60h139 M2080 56h155" stroke="#121d30" stroke-width="4" fill="none"/><path d="M1648 62h177 M999 55h46 M1547 51h35 M806 77h121 M797 75h48 M1886 61h116 M1154 77h33 M1936 77h31 M160 156h87 M870 68h61 M368 130h41 M36 146h95 M1607 33h142 M378 110h55 M333 131h34 M549 81h123 M1027 61h66 M911 77h104 M1035 78h142 M658 71h71 M1497 54h140 M1192 76h118 M432 104h94 M446 113h56 M334 114h158 M814 56h132 M1316 70h159 M687 63h63 M1822 71h113 M1888 67h32 M1143 61h84 M1897 83h73 M1835 69h110 M760 63h83 M667 56h135 M925 64h70 M1387 76h75 M363 128h34 M1992 63h75 M1303 72h128 M1366 69h39 M1379 78h81 M929 69h155 M742 72h174 M153 160h156 M1176 77h115 M1330 69h57 M112 149h136 M880 55h49 M264 136h146 M1536 39h76 M1960 64h105 M74 156h121 M1391 67h134 M1887 84h84 M1134 73h160 M474 96h44 M204 143h65 M1100 70h60 M702 71h72 M34 163h70 M966 69h51 M54 164h36 M1518 54h129 M508 83h154 M840 76h66 M411 101h114 M455 108h165 M1875 67h51 M970 76h45 M1662 70h171 M398 108h131 M1501 65h113 M1272 63h177 M1441 81h121 M238 141h88 M426 113h54 M86 152h44 M984 66h32 M1774 57h118 M139 157h90 M861 66h96 M618 84h105 M1220 64h78 M794 67h110 M125 162h51 M1930 73h32 M22 165h61 M1381 70h175 M327 130h179 M275 122h141 M586 88h26 M1821 67h61 M1090 56h137 M1429 80h114 M1073 79h41 M1339 63h127 M1411 64h145 M1184 82h153 M658 73h78 M368 122h132 M1890 80h169 M1569 21h174 M667 70h46 M1559 44h156 M244 134h149 M692 62h97 M1376 63h110 M1077 72h159 M594 67h63" stroke="#131f33" stroke-width="3" fill="none"/></g><rect x="1525" y="416" width="30" height="9" fill="#a8c060"/></svg>
<svg style="left:1740px;top:1150px" width="60" height="110"><polygon points="29.4,6.8 53.5,55 37.2,55 37.2,104 21.5,104 21.5,55 5.6,55" fill="#4e9e34"/></svg>
<div class="r" style="left:1596px;top:1252px;width:357px;height:70px;background:#fff;border:4px solid #4e9e34"></div>
<div class="t" style="left:1620px;top:1264.37px;font-size:48px;line-height:48px;color:#58595b;font-weight:normal;">Selected block</div>
<svg style="left:2260px;top:85px" width="120" height="115"><path d="M15.8 32 V96" stroke="#10f5f5" stroke-width="3"/><text x="9.5" y="31.5" font-family="Liberation Sans" font-weight="bold" font-size="36" fill="#19e0e0" stroke="#111" stroke-width="2.8" paint-order="stroke">Z</text><text x="15" y="106" font-family="Liberation Sans" font-weight="bold" font-size="38" fill="#00e000" stroke="#111" stroke-width="2.5" paint-order="stroke">N</text><text x="0" y="0" transform="translate(84.5,108) scale(0.88,1)" font-family="Liberation Sans" font-weight="bold" font-size="38" fill="#ee0000" stroke="#300" stroke-width="2.8" paint-order="stroke">E</text><path d="M15 96.5 H78" stroke="#ff2020" stroke-width="3"/><path d="M67 98 H77 L75 101 H69 Z" fill="#ff2020"/></svg>
</body></html>
